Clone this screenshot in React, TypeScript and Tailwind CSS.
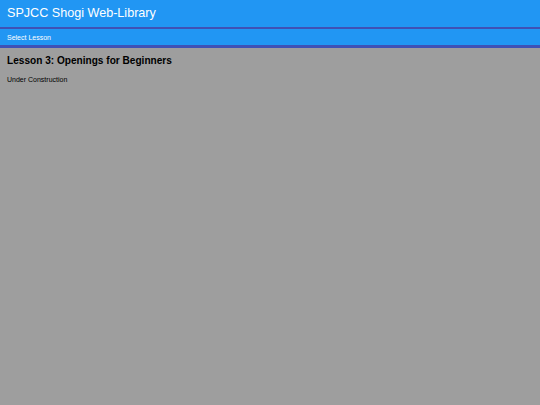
export default function App() {
  return (
    <div className="min-h-screen bg-[#9e9e9e] font-['Liberation_Sans',Arial,sans-serif]">
      <header className="flex h-[29px] items-center border-b-2 border-[#3f51b5] bg-[#2196f3] px-[7px] pb-[1px]">
        <h1 className="text-[12.6px] leading-none text-white">SPJCC Shogi Web-Library</h1>
      </header>
      <nav className="flex h-[19px] items-center border-b-[3px] border-[#3f51b5] bg-[#2196f3] px-[7px]">
        <span className="text-[7px] leading-none text-white">Select Lesson</span>
      </nav>
      <main className="px-[7px] pt-[6.6px]">
        <h2 className="text-[10.1px] font-bold leading-[11.5px] text-black">Lesson 3: Openings for Beginners</h2>
        <p className="mt-[10px] text-[7px] leading-[8px] text-black">Under Construction</p>
      </main>
    </div>
  );
}
